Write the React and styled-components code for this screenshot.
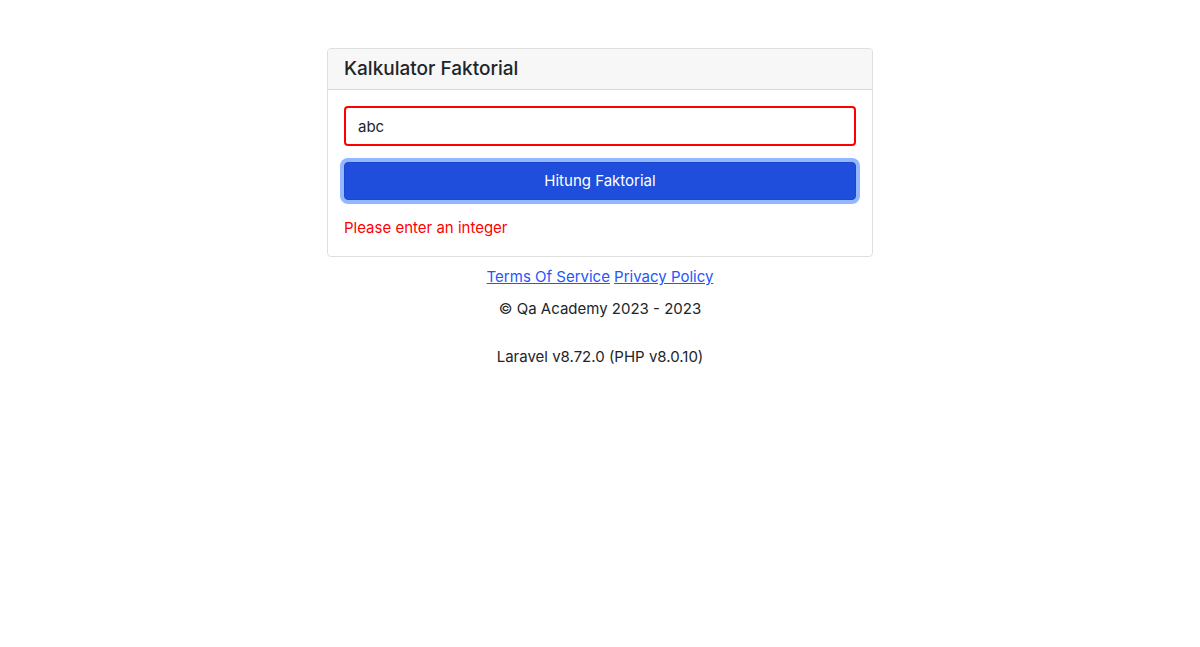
import React, { useState } from "react";
import styled, { createGlobalStyle } from "styled-components";

const GlobalStyle = createGlobalStyle`
  *, *::before, *::after { box-sizing: border-box; }
  body {
    margin: 0;
    background: #fff;
    color: #212529;
    font-family: Inter, "Liberation Sans", sans-serif;
    font-size: 15px;
    line-height: 24px;
  }
`;

const Page = styled.div`
  padding: 48px 12px 0;
`;

const Main = styled.main`
  max-width: 546px;
  margin: 0 auto;
`;

const Card = styled.section`
  border: 1px solid #dfdfdf;
  border-radius: 4px;
  background: #fff;
`;

const CardHeader = styled.header`
  padding: 8px 16px;
  border-bottom: 1px solid #d8d8d8;
  border-radius: 3px 3px 0 0;
  background: #f7f7f7;
`;

const Title = styled.h1`
  margin: 0;
  font-size: 19px;
  font-weight: 500;
  line-height: 24px;
`;

const Form = styled.form`
  display: flex;
  flex-direction: column;
  gap: 16px;
  padding: 16px;
`;

const NumberInput = styled.input`
  width: 100%;
  height: 40px;
  padding: 6px 12px;
  border: 2px solid ${(p) => (p.$invalid ? "#f00" : "#ced4da")};
  border-radius: 4px;
  background: #fff;
  color: inherit;
  font: inherit;
  outline: none;
`;

const SubmitButton = styled.button`
  width: 100%;
  height: 38px;
  padding: 6px 12px;
  border: 1px solid #1b48ce;
  border-radius: 4px;
  background: #1e4edb;
  box-shadow: 0 0 0 4px #94b8ff;
  color: #fff;
  font: inherit;
  cursor: pointer;
`;

const Message = styled.p`
  margin: 0;
  color: #f00;
`;

const Footer = styled.footer`
  display: flex;
  flex-direction: column;
  gap: 8px;
  padding-top: 8px;
  text-align: center;
`;

const FooterLink = styled.a`
  color: #2456fa;
  text-decoration: underline;
`;

const Version = styled.div`
  padding-top: 16px;
`;

export default function App() {
  const [value, setValue] = useState("abc");
  return (
    <Page>
      <GlobalStyle />
      <Main>
        <Card>
          <CardHeader>
            <Title id="title">Kalkulator Faktorial</Title>
          </CardHeader>
          <Form onSubmit={(e) => e.preventDefault()}>
            <NumberInput
              $invalid
              type="text"
              aria-labelledby="title"
              aria-invalid="true"
              aria-describedby="message"
              value={value}
              onChange={(e) => setValue(e.target.value)}
            />
            <SubmitButton type="submit">Hitung Faktorial</SubmitButton>
            <Message id="message">Please enter an integer</Message>
          </Form>
        </Card>
        <Footer>
          <div>
            <FooterLink href="#terms">Terms Of Service</FooterLink>{" "}
            <FooterLink href="#privacy">Privacy Policy</FooterLink>
          </div>
          <div>© Qa Academy 2023 - 2023</div>
          <Version>Laravel v8.72.0 (PHP v8.0.10)</Version>
        </Footer>
      </Main>
    </Page>
  );
}
